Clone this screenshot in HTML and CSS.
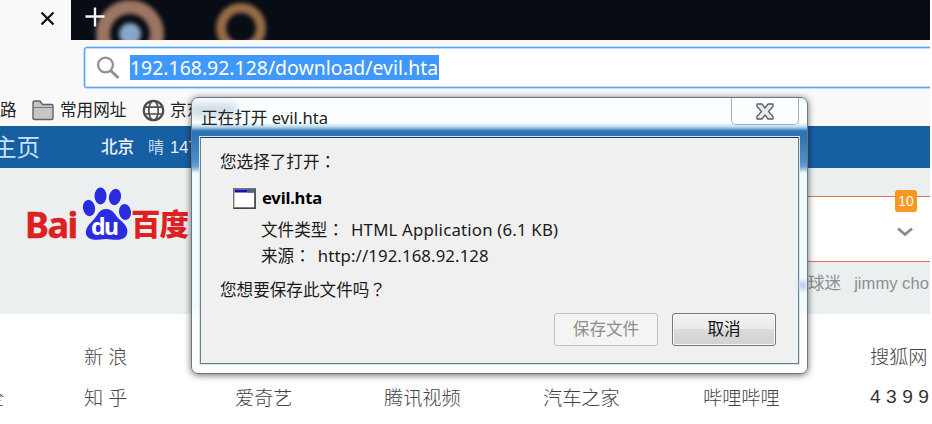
FILE: index.html
```html
<!DOCTYPE html>
<html lang="zh-CN">
<head>
<meta charset="utf-8">
<title>正在打开 evil.hta</title>
<link rel="stylesheet" href="styles.css">
</head>
<body>
<div class="browser">
  <header class="tabstrip">
    <div class="tab"><svg width="15" height="15" viewBox="0 0 15 15"><path d="M1.5 1.5 13.5 13.5M13.5 1.5 1.5 13.5" stroke="#111" stroke-width="2.2" fill="none"/></svg></div>
    <div class="theme">
      <svg width="859" height="40" viewBox="71 0 859 40">
        <defs><filter id="soft" x="-20%" y="-20%" width="140%" height="140%"><feGaussianBlur stdDeviation="2.2"/></filter></defs>
        <g filter="url(#soft)" fill="none">
          <circle cx="130" cy="34" r="27" stroke="#9c7562" stroke-width="14"/>
          <circle cx="130" cy="34" r="11" fill="#89a6c8"/>
          <circle cx="241" cy="28" r="20" stroke="#956c45" stroke-width="10"/>
        </g>
        <path d="M95 7.500v19M85.500 16.500h19" stroke="#f4f4f4" stroke-width="2.400"/>
      </svg>
    </div>
  </header>
  <div class="toolbar">
    <div class="urlbar">
      <svg class="search" width="24" height="24" viewBox="0 0 24 24" fill="none" stroke="#919191"><circle cx="9.500" cy="9" r="7.400" stroke-width="2.300"/><path d="m14.500 14.500 8 7.500" stroke-width="3"/></svg>
      <span class="url">192.168.92.128/download/evil.hta</span>
    </div>
  </div>
  <nav class="bookmarks">
    <span class="bm-cut">路</span>
    <svg class="folder" width="22" height="21" viewBox="0 0 22 21"><path d="M1 19V2.500Q1 1 2.500 1H8l2.500 3.500h9Q21 4.500 21 6v12q0 1.500-1.500 1.500h-17Q1 19.500 1 18Z" fill="#c6c6c6" stroke="#626262" stroke-width="1.400"/><path d="M1.500 7.500h19" stroke="#777"/></svg>
    <span class="bm-common">常用网址</span>
    <svg class="globe" width="23" height="23" viewBox="0 0 23 23" fill="none" stroke="#4d4d4d" stroke-width="1.700"><circle cx="11.500" cy="11.500" r="9.700" stroke-width="2.200"/><ellipse cx="11.500" cy="11.500" rx="4.700" ry="9.700"/><path d="M2 8.200h19M2 15h19"/></svg>
    <span class="bm-jd">京东</span>
  </nav>
  <div class="bluebar"><span class="home">主页</span><span class="city">北京</span><span class="weather">晴</span><span class="temp">147</span></div>
  <section class="hero">
    <div class="logo">
      <span class="bai">Bai</span>
      <span class="paw">
        <svg width="50" height="54" viewBox="0 0 50 54" fill="#2b2be0"><ellipse cx="7" cy="21" rx="6" ry="8.200" transform="rotate(-10 7 21)"/><ellipse cx="18.500" cy="9" rx="6" ry="8.500"/><ellipse cx="33" cy="10" rx="6" ry="8.200" transform="rotate(12 33 10)"/><ellipse cx="43" cy="25" rx="6" ry="8" transform="rotate(-8 43 25)"/><path d="M24 22c7 0 9 6 13 10 5 4 10 9 8 15-2 7-10 6-21 5-10 1-18 2-20-5-1-7 5-11 9-16 3-4 5-9 11-9Z"/></svg>
        <span class="du">du</span>
      </span>
      <span class="baidu">百度</span>
    </div>
    <div class="results">
      <div class="searchbox"><svg width="16" height="10" viewBox="0 0 16 10"><path d="m1 1.500 7 6 7-6" fill="none" stroke="#858990" stroke-width="2.600"/></svg><span class="count">10</span></div>
      <div class="hot"><span>球迷</span><span class="jimmy">jimmy cho</span></div>
    </div>
  </section>
  <section class="links">
    <div class="row"><span></span><span class="spaced">新浪</span><span></span><span></span><span></span><span></span><span>搜狐网</span></div>
    <div class="row"><span class="cut">全</span><span class="spaced">知乎</span><span>爱奇艺</span><span>腾讯视频</span><span>汽车之家</span><span>哔哩哔哩</span><span class="num">4399</span></div>
  </section>

  <div class="dialog">
    <div class="titlebar"><span class="title">正在打开 <span class="tl">evil.hta</span></span>
      <div class="close"><svg width="20" height="17" viewBox="0 0 20 17"><path d="M2 1h5l3 4 3-4h5v2.500L13.500 8.500l4.500 5V16h-5l-3-4-3 4H2v-2.500l4.500-5L2 3.500Z" fill="#e7e8eb" stroke="#5c6068" stroke-width="1.300" stroke-linejoin="round"/></svg></div>
    </div>
    <div class="content">
      <p class="q1">您选择了打开<span class="p" lang="zh-TW">：</span></p>
      <div class="file"><svg width="23" height="21" viewBox="0 0 23 21"><path d="M.7.7h21.600v19.600H.7Z" fill="#fff" stroke="#777" stroke-width="1.400"/><path d="M1.500 1.500H21V4.500H1.500Z" fill="#1111b0"/><path d="M14 1.500h7v3h-7z" fill="#555a80"/><path d="M22 1v19.300H1" fill="none" stroke="#444" stroke-width="1.500"/></svg><b>evil.hta</b></div>
      <dl>
        <div><dt>文件类型<span class="p" lang="zh-TW">：</span></dt><dd class="type">HTML Application (6.1 KB)</dd></div>
        <div><dt>来源<span class="p" lang="zh-TW">：</span></dt><dd class="from">http://192.168.92.128</dd></div>
      </dl>
      <p class="q2">您想要保存此文件吗<span class="p" lang="zh-TW">？</span></p>
      <div class="actions"><button class="save" disabled>保存文件</button><button class="cancel">取消</button></div>
    </div>
  </div>
</div>
</body>
</html>
```
FILE: styles.css
```css
* { box-sizing: border-box; }
body { margin: 0; width: 932px; height: 424px; overflow: hidden; background: #fff; font: 16.6px/24px "Noto Sans", "Noto Sans CJK SC", sans-serif; color: #222; }
svg { display: block; flex: none; }
p, dl, dd { margin: 0; }
span, b, dt, dd, p { white-space: nowrap; }
.browser { position: relative; width: 930px; height: 424px; overflow: hidden; }

.tabstrip { display: flex; height: 40px; background: #080c15; }
.tab { width: 71px; height: 40px; background: #f9f9fa; padding: 11px 0 0 40px; }
.theme { flex: 1; overflow: hidden; }
.toolbar { height: 54px; background: #f9f9fa; padding: 7px 0 0 84px; }
.urlbar { display: flex; align-items: center; width: 860px; height: 41px; border: 1px solid #5aa5f5; border-radius: 3px; background: #fff; box-shadow: 0 0 0 .5px #8abfff, inset 0 0 0 .5px #8abfff; padding-left: 11px; }
.search { margin-right: 10px; }
.url { background: #3f98fc; color: #fff; height: 25px; line-height: 25px; width: 309px; font-size: 19.4px; letter-spacing: .02px; }
.bookmarks { display: flex; align-items: center; height: 32px; background: #f9f9fa; overflow: hidden; }
.bm-cut { width: 32px; }
.folder { margin-right: 6px; }
.bm-common { width: 82px; }
.globe { margin-right: 5px; }
.bluebar { display: flex; align-items: center; height: 42px; background: #165fa3; color: #e9f3ff; overflow: hidden; }
.home { margin-left: -7px; width: 108px; font-size: 23.5px; color: #c9e0f8; }
.city { width: 47px; font-weight: 500; }
.weather { width: 22px; color: #c4dcf5; font-size: 16px; }
.temp { font-family: "Liberation Sans", "Noto Sans CJK SC", sans-serif; font-size: 16.5px; }

.hero { display: flex; justify-content: space-between; height: 146px; background: #ebeff0; }
.logo { display: flex; padding: 19px 0 0 25px; color: #df2020; height: 76px; }
.bai { width: 57px; padding-top: 18px; font: bold 36px/40px "Noto Sans", sans-serif; letter-spacing: -1.5px; -webkit-text-stroke: .5px #df2020; }
.paw { position: relative; width: 49px; }
.du { position: absolute; left: 9px; top: 27px; color: #fff; font: bold 23px/24px "Noto Sans", sans-serif; letter-spacing: -1.5px; }
.baidu { padding-top: 15px; font: 900 29.5px/40px "Noto Sans CJK SC", sans-serif; letter-spacing: -1px; }
.results { width: 140px; padding-top: 28px; }
.searchbox { position: relative; height: 66px; background: #fff; border-top: 1px solid #df7257; border-bottom: 1px solid #df7257; padding: 30px 0 0 107px; }
.count { position: absolute; left: 105px; top: -7px; width: 22px; height: 22px; border-radius: 3px; background: #fb9620; color: #fff; font: 14px/22px "Liberation Sans", sans-serif; text-align: center; }
.hot { display: flex; gap: 13px; padding: 10px 0 0 18px; color: #8c8f91; font: 16.6px/24px "Liberation Sans", "Noto Sans CJK SC", sans-serif; }

.links { padding-top: 30px; color: #444; font-family: "Noto Sans CJK SC", sans-serif; font-weight: 300; font-size: 19.2px; }
.row { display: grid; grid-template-columns: 84px 151px 149px 159px 160px 167px 70px; height: 41px; line-height: 24px; }
.spaced { letter-spacing: 5px; }
.cut { margin-left: -15px; }
.num { font-family: "Liberation Sans", sans-serif; font-weight: 400; letter-spacing: 5.400px; color: #333; }

.dialog { position: absolute; left: 191px; top: 97px; width: 617px; height: 277px; border: 1px solid #6e777d; border-radius: 7px; padding: 0 8px 8px; background: linear-gradient(#f7feff 0, #fbffff 25px, #b5d6ef 29px, #2e74b4 33px, #2e74b4 39px, #5190c9 64px, #6fa4d5 69px, #effcff 75px, #effcff 210px, #fff 220px); box-shadow: 0 1px 7px rgba(0,0,0,.6); overflow: hidden; }
.dialog::after { content: ""; position: absolute; right: 0; top: 183px; width: 8px; height: 9px; background: #b8cdf0; filter: blur(2px); }
.dialog::before { content: ""; position: absolute; left: -4px; top: 6px; width: 48px; height: 13px; background: #9db7c8; opacity: .5; filter: blur(4px); }
.titlebar { display: flex; justify-content: space-between; height: 39px; position: relative; }
.title { padding-top: 8px; margin-left: 1px; }
.tl { letter-spacing: .05px; }
.close { width: 68px; height: 27px; border: 1px solid #a3afb8; border-top: 0; border-radius: 0 0 5px 5px; background: #fbffff; display: flex; justify-content: center; padding-top: 5px; }
.content { width: 599px; height: 227px; border: 1px solid #6f7b83; border-top-color: #173c61; background: #f0f0f0; padding: 12px 22px 0 19px; color: #1b1b1b; box-shadow: 0 0 0 1px #cfe8f4; }
.p { font-family: "Noto Sans CJK TC", sans-serif; line-height: 1; }
.q1 { height: 24px; margin-bottom: 12px; }
.file { display: flex; align-items: center; gap: 6px; height: 24px; padding-left: 13px; color: #000; letter-spacing: -.2px; }
dl { padding: 8px 0 0 41px; }
dl div { display: flex; height: 26px; }
dt { margin-right: 7px; }
.type { font-size: 16.8px; letter-spacing: .2px; }
.from { font-size: 16.8px; letter-spacing: .1px; }
.q2 { height: 32px; padding-top: 8px; }
.actions { display: flex; justify-content: flex-end; gap: 14px; padding-top: 11px; }
button { width: 104px; height: 33px; border: 1px solid #75787b; border-radius: 3px; padding: 0 0 2px; font: inherit; }
.save { color: #8d8d8d; border-color: #bec2c4; background: #f4f4f4; }
.cancel { color: #111; background: linear-gradient(#f3f3f3, #e9e9e9 49%, #dadada 50%, #d1d1d1); box-shadow: inset 0 0 0 1px #f8f8f8; }
```
